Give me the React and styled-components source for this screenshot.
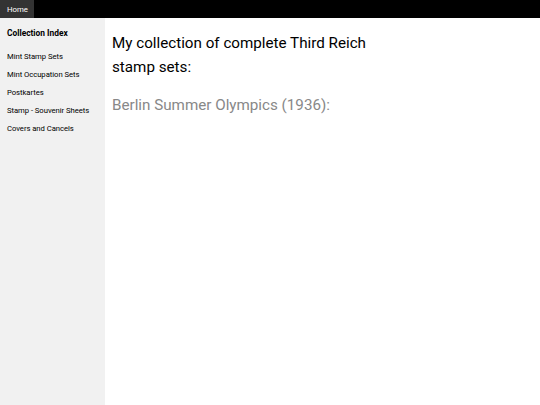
import React from "react";
import styled, { createGlobalStyle } from "styled-components";

const Global = createGlobalStyle`
  html, body { margin: 0; padding: 0; height: 100%; }
  body { font-family: Roboto, "Noto Sans", sans-serif; background: #fff; }
  #root { height: 100%; }
`;

const Page = styled.div`
  display: flex;
  flex-direction: column;
  height: 405px;
`;

const TopBar = styled.nav`
  display: flex;
  height: 18px;
  background: #000;
  flex-shrink: 0;
`;

const Tab = styled.a`
  display: flex;
  align-items: center;
  width: 34px;
  box-sizing: border-box;
  padding: 0 7px;
  background: ${(p) => (p.$active ? "#333" : "transparent")};
  color: #fff;
  font-size: 7.8px;
  text-decoration: none;
`;

const Body = styled.div`
  display: flex;
  flex: 1;
`;

const Sidebar = styled.aside`
  width: 105px;
  background: #f1f1f1;
  padding: 9px 7px 0;
  box-sizing: border-box;
`;

const SideTitle = styled.div`
  font-size: 8.4px;
  font-weight: 700;
  color: #000;
  line-height: 12px;
  margin-bottom: 9px;
`;

const SideLink = styled.a`
  display: block;
  font-size: 7.7px;
  letter-spacing: -0.05px;
  color: #000;
  line-height: 18px;
  text-decoration: none;
`;

const Main = styled.main`
  flex: 1;
  padding: 13px 7px;
`;

const Heading = styled.h1`
  margin: 0;
  width: 262px;
  font-size: 15.2px;
  font-weight: 400;
  line-height: 24px;
  color: #000;
`;

const SubHeading = styled.h2`
  margin: 14px 0 0;
  font-size: 15.2px;
  font-weight: 400;
  line-height: 24px;
  color: #888;
`;

export default function App() {
  const links = [
    "Mint Stamp Sets",
    "Mint Occupation Sets",
    "Postkartes",
    "Stamp - Souvenir Sheets",
    "Covers and Cancels",
  ];
  return (
    <>
      <Global />
      <Page>
        <TopBar>
          <Tab $active href="#">Home</Tab>
        </TopBar>
        <Body>
          <Sidebar>
            <SideTitle>Collection Index</SideTitle>
            {links.map((l) => (
              <SideLink key={l} href="#">{l}</SideLink>
            ))}
          </Sidebar>
          <Main>
            <Heading>My collection of complete Third Reich stamp sets:</Heading>
            <SubHeading>Berlin Summer Olympics (1936):</SubHeading>
          </Main>
        </Body>
      </Page>
    </>
  );
}
